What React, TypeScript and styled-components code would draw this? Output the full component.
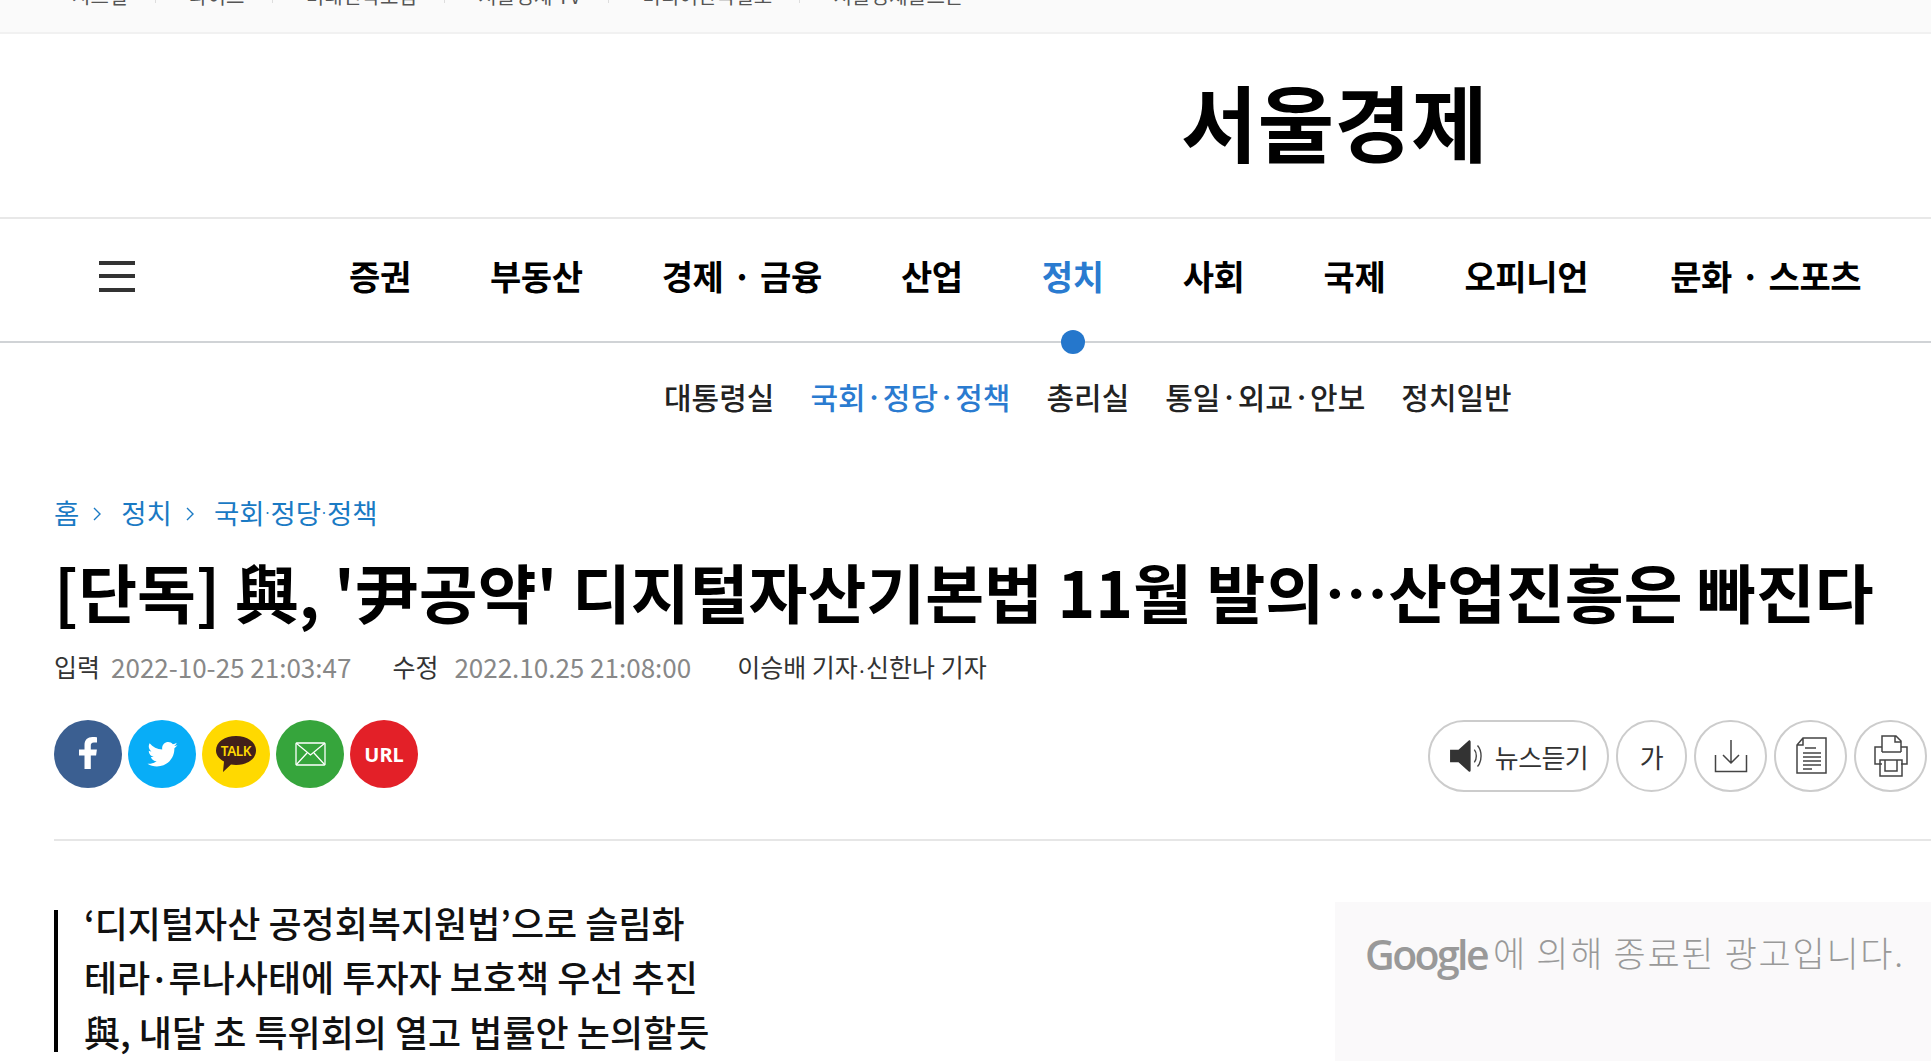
import React from 'react';
import styled, { createGlobalStyle } from 'styled-components';

const CJK = `"Noto Sans CJK KR", "Noto Sans", sans-serif`;

const Global = createGlobalStyle`
  html, body { margin: 0; padding: 0; background: #fff; overflow: hidden; }
  body { font-family: ${CJK}; color: #000; }
`;

const Page = styled.div`
  width: 1931px;
  height: 1061px;
  overflow: hidden;
`;

const TopBar = styled.div`
  height: 32px;
  background: #fafafa;
  border-bottom: 2px solid #f1f1f1;
  display: flex;
  align-items: flex-end;
  padding-left: 72px;
  overflow: hidden;
`;
const TopList = styled.div`
  display: flex;
  align-items: center;
  height: 24px;
  margin-bottom: 24px;
  flex-shrink: 0;
`;
const TopItem = styled.span`
  display: flex;
  align-items: center;
  font-size: 20px;
  line-height: 24px;
  letter-spacing: 0.2px;
  color: #555;
  white-space: nowrap;
  & + &::before {
    content: '';
    display: block;
    width: 1px;
    height: 14px;
    background: #ddd;
    margin: 0 33px 0 27px;
  }
`;

const Masthead = styled.div`
  height: 173px;
  padding: 0 0 10px 1181px;
  border-bottom: 2px solid #e8e8e8;
  display: flex;
  align-items: center;
`;
const Logo = styled.div`
  font-size: 83px;
  font-weight: 700;
  line-height: 1;
  letter-spacing: 0.4px;
  color: #000;
  white-space: nowrap;
`;

const Nav = styled.div`
  height: 114px;
  padding: 0 0 8px 99px;
  border-bottom: 2px solid #d0d3d6;
  display: flex;
  align-items: center;
`;
const Burger = styled.div`
  width: 36px;
  height: 31px;
  margin-right: 214px;
  display: flex;
  flex-direction: column;
  justify-content: space-between;
  & > i {
    display: block;
    height: 4px;
    background: #333;
  }
`;
const NavList = styled.div`
  display: flex;
  gap: 79px;
`;
const NavItem = styled.a<{ $on?: boolean }>`
  font-size: 34px;
  font-weight: 700;
  letter-spacing: -0.35px;
  word-spacing: 1px;
  line-height: 44px;
  color: ${(p) => (p.$on ? '#2a7bd0' : '#000')};
  white-space: nowrap;
  position: relative;
`;
const LastNavItem = styled(NavItem)`
  margin-left: 3px;
`;
const Dot = styled.span`
  position: absolute;
  left: 50%;
  bottom: -56px;
  width: 24px;
  height: 24px;
  margin-left: -12px;
  border-radius: 50%;
  background: #2577cc;
`;

const SubNav = styled.div`
  display: flex;
  gap: 36px;
  padding: 31px 0 0 664px;
  height: 77px;
`;
const SubItem = styled.a<{ $on?: boolean }>`
  font-size: 30px;
  line-height: 44px;
  font-weight: 500;
  color: ${(p) => (p.$on ? '#2a7bd0' : '#222')};
  white-space: nowrap;
`;
const Mid = styled.span<{ $size: number }>`
  font-size: ${(p) => p.$size}px;
  font-weight: 700;
`;

const Article = styled.div`
  padding: 41px 0 0 54px;
`;
const Crumbs = styled.div`
  display: flex;
  align-items: center;
  height: 40px;
  font-size: 27.5px;
  color: #1a7ac4;
  white-space: nowrap;
`;
const Chevron = styled.svg`
  width: 10px;
  height: 16px;
  margin: 4px 19px 0 13px;
  fill: none;
  stroke: #1a7ac4;
  stroke-width: 1.4;
`;
const Title = styled.h1`
  margin: 16px 0 0;
  font-size: 64px;
  line-height: 84px;
  font-weight: 700;
  color: #000;
  white-space: nowrap;
`;
const Meta = styled.div`
  display: flex;
  align-items: center;
  margin-top: 14px;
  height: 40px;
  font-size: 25px;
  color: #333;
  white-space: nowrap;
`;
const MetaDate = styled.span<{ $gap: number }>`
  font-size: 26px;
  color: #888;
  margin-left: ${(p) => p.$gap}px;
  margin-right: 41px;
`;
const Reporter = styled.span`
  margin-left: 5px;
`;

const ActionRow = styled.div`
  display: flex;
  justify-content: space-between;
  align-items: flex-start;
  margin-top: 34px;
  padding-right: 4px;
  height: 119px;
  border-bottom: 2px solid #e6e6e6;
`;
const Shares = styled.div`
  display: flex;
  gap: 6px;
`;
const Share = styled.div<{ $bg: string }>`
  width: 68px;
  height: 68px;
  border-radius: 50%;
  background: ${(p) => p.$bg};
  display: flex;
  align-items: center;
  justify-content: center;
  color: #fff;
  font-family: "Noto Sans", "Liberation Sans", sans-serif;
  font-weight: 700;
  font-size: 20px;
`;
const Tools = styled.div`
  display: flex;
  gap: 7px;
`;
const ToolBtn = styled.div`
  width: 73px;
  height: 72px;
  box-sizing: border-box;
  border: 2px solid #ccc;
  border-radius: 36px;
  display: flex;
  align-items: center;
  justify-content: center;
  font-size: 26px;
  color: #333;
  letter-spacing: -0.6px;
`;
const SizeBtn = styled(ToolBtn)`
  width: 71px;
`;
const ListenBtn = styled(ToolBtn)`
  width: 181px;
  gap: 8px;
`;

const Lower = styled.div`
  display: flex;
  justify-content: space-between;
  align-items: flex-start;
  margin-top: 61px;
`;
const Summary = styled.div`
  margin-top: 8px;
  width: 800px;
  border-left: 4px solid #000;
  box-sizing: border-box;
  height: 142px;
  padding-left: 26px;
  font-size: 36px;
  font-weight: 500;
  white-space: nowrap;
  color: #111;
`;
const SummaryLine = styled.div`
  height: 54.4px;
  line-height: 54.4px;
  position: relative;
  top: -15px;
`;
const Ad = styled.div`
  width: 596px;
  height: 160px;
  background: #faf9fa;
  box-sizing: border-box;
  padding: 22px 0 0 30px;
  display: flex;
  align-items: flex-start;
  gap: 6px;
  color: #999;
  white-space: nowrap;
`;
const GoogleWord = styled.span`
  font-family: "Open Sans", "Liberation Sans", sans-serif;
  font-size: 41px;
  line-height: 60px;
  font-weight: 600;
  letter-spacing: -2.6px;
  color: #999;
`;
const AdText = styled.span`
  font-size: 35px;
  line-height: 56px;
  font-weight: 300;
  letter-spacing: 1.7px;
`;

const stroke = { fill: 'none', stroke: '#444', strokeWidth: 1.5 };

export default function App() {
  return (
    <Page>
      <Global />
      <TopBar>
        <TopList>
          <TopItem>시그널</TopItem>
          <TopItem>라이프</TopItem>
          <TopItem>미래전략포럼</TopItem>
          <TopItem>서울경제 TV</TopItem>
          <TopItem>미디어한국일보</TopItem>
          <TopItem>서울경제골프존</TopItem>
        </TopList>
      </TopBar>
      <Masthead>
        <Logo>서울경제</Logo>
      </Masthead>
      <Nav>
        <Burger>
          <i />
          <i />
          <i />
        </Burger>
        <NavList>
          <NavItem>증권</NavItem>
          <NavItem>부동산</NavItem>
          <NavItem>경제 · 금융</NavItem>
          <NavItem>산업</NavItem>
          <NavItem $on>
            정치
            <Dot />
          </NavItem>
          <NavItem>사회</NavItem>
          <NavItem>국제</NavItem>
          <NavItem>오피니언</NavItem>
          <LastNavItem>문화 · 스포츠</LastNavItem>
        </NavList>
      </Nav>
      <SubNav>
        <SubItem>대통령실</SubItem>
        <SubItem $on>국회·정당·정책</SubItem>
        <SubItem>총리실</SubItem>
        <SubItem>통일·외교·안보</SubItem>
        <SubItem>정치일반</SubItem>
      </SubNav>
      <Article>
        <Crumbs>
          홈
          <Chevron viewBox="0 0 10 16">
            <path d="M2 2l6 6-6 6" />
          </Chevron>
          정치
          <Chevron viewBox="0 0 10 16">
            <path d="M2 2l6 6-6 6" />
          </Chevron>
          국회<Mid $size={10}>·</Mid>정당<Mid $size={10}>·</Mid>정책
        </Crumbs>
        <Title>[단독] 與, '尹공약' 디지털자산기본법 11월 발의…산업진흥은 빠진다</Title>
        <Meta>
          입력
          <MetaDate $gap={11}>2022-10-25 21:03:47</MetaDate>
          수정
          <MetaDate $gap={16}>2022.10.25 21:08:00</MetaDate>
          <Reporter>
            이승배 기자<Mid $size={14}>·</Mid>신한나 기자
          </Reporter>
        </Meta>
        <ActionRow>
          <Shares>
            <Share $bg="#3b5f91">
              <svg width="18" height="34" viewBox="0 0 18 34">
                <path
                  fill="#fff"
                  d="M5.500 32V18.500H0v-6h5.500V8C5.500 2.800 8.700 0 13.400 0c2.200 0 3.600.2 4.600.3V5.600h-3c-2.600 0-3.200 1.300-3.200 3.100v3.800h6.100l-.8 6h-5.300V32z"
                />
              </svg>
            </Share>
            <Share $bg="#08adf7">
              <svg width="31" height="25" viewBox="0 0 24 20">
                <path
                  fill="#fff"
                  d="M24 2.400c-.9.400-1.800.7-2.800.8 1-.6 1.800-1.600 2.200-2.700-1 .6-2 1-3.100 1.200C19.300.6 18 0 16.600 0c-2.700 0-4.900 2.200-4.900 4.900 0 .4 0 .8.100 1.100C7.700 5.800 4.100 3.900 1.700.9c-.4.700-.7 1.600-.7 2.500 0 1.700.9 3.200 2.200 4.100-.8 0-1.600-.2-2.200-.6v.1c0 2.400 1.700 4.400 3.900 4.800-.4.100-.8.200-1.300.2-.3 0-.6 0-.9-.1.600 2 2.400 3.400 4.600 3.400-1.700 1.300-3.800 2.100-6.100 2.100-.4 0-.8 0-1.200-.1 2.200 1.400 4.800 2.200 7.500 2.200 9.100 0 14-7.500 14-14v-.6c1-.7 1.800-1.600 2.500-2.500z"
                />
              </svg>
            </Share>
            <Share $bg="#ffd900">
              <svg width="42" height="37" viewBox="0 0 42 37">
                <path fill="#42201a" d="M21 0c11 0 20 5.800 20 14.500S32 29 21 29c-1.900 0-3.500-.1-5-.4L8 36l1-10.500C4 23 1 19 1 14.500 1 5.800 10 0 21 0z" />
                <text x="21" y="20" textAnchor="middle" fontFamily="'Noto Sans', Inter, sans-serif" fontWeight="600" fontSize="13.500" letterSpacing="-0.4" fill="#ffd900">
                  TALK
                </text>
              </svg>
            </Share>
            <Share $bg="#36a53c">
              <svg width="31" height="24" viewBox="0 0 31 24">
                <g fill="none" stroke="#fff" strokeWidth="1.3">
                  <rect x="1" y="1" width="29" height="22" rx="1" />
                  <path d="M1 1l14.500 12L30 1M1 23l11-12M30 23L19 11" />
                </g>
              </svg>
            </Share>
            <Share $bg="#e32028">URL</Share>
          </Shares>
          <Tools>
            <ListenBtn>
              <svg width="38" height="34" viewBox="0 0 36 32">
                <path fill="#333" d="M1 10h8l10-9c1 0 1.500.5 1.500 1.500v27c0 1-.5 1.500-1.500 1.500L9 22H1z" />
                <path fill="none" stroke="#444" strokeWidth="1.3" d="M24 10c2.500 3 2.500 9 0 12M27 6c4.500 5 4.500 15 0 20" />
              </svg>
              뉴스듣기
            </ListenBtn>
            <SizeBtn>가</SizeBtn>
            <ToolBtn>
              <svg width="34" height="34" viewBox="0 0 34 34" {...stroke}>
                <path d="M1.500 16v16.500h31V16M17 1v23M9 16l8 8 8-8" />
              </svg>
            </ToolBtn>
            <ToolBtn>
              <svg width="32" height="38" viewBox="0 0 32 38" {...stroke}>
                <path d="M8 1h23v35H2V8zM8 1v7H2" />
                <path d="M10 11h11M8 16h18M8 20h18M8 24h18M8 28h18M8 32h9" />
              </svg>
            </ToolBtn>
            <ToolBtn>
              <svg width="34" height="42" viewBox="0 0 34 42" {...stroke}>
                <path d="M8 17V1h14l5 5v11M27 7h-6V1M8 17h19" />
                <path d="M8 29H1V12h7M27 12h6v17h-6" />
                <path d="M6 25h22v16H6zM11 25v11h12V25" />
              </svg>
            </ToolBtn>
          </Tools>
        </ActionRow>
        <Lower>
          <Summary>
            <SummaryLine>‘디지털자산 공정회복지원법’으로 슬림화</SummaryLine>
            <SummaryLine>
              테라<Mid $size={31}>·</Mid>루나사태에 투자자 보호책 우선 추진
            </SummaryLine>
            <SummaryLine>與, 내달 초 특위회의 열고 법률안 논의할듯</SummaryLine>
          </Summary>
          <Ad>
            <GoogleWord>Google</GoogleWord>
            <AdText>에 의해 종료된 광고입니다.</AdText>
          </Ad>
        </Lower>
      </Article>
    </Page>
  );
}
